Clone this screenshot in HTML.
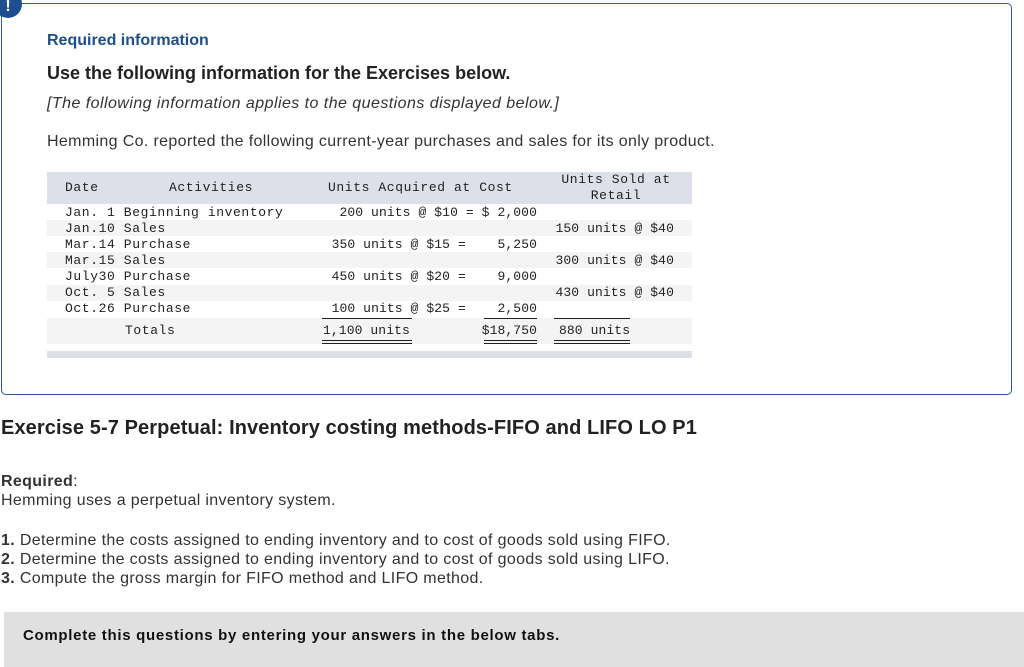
<!DOCTYPE html>
<html><head><meta charset="utf-8"><style>
*{margin:0;padding:0;box-sizing:border-box}
body{width:1024px;height:667px;background:#fff;position:relative;overflow:hidden;font-family:"Liberation Sans",sans-serif;color:#222}
.a{position:absolute;white-space:nowrap}
.m{font-family:"Liberation Mono",monospace;font-size:13px;letter-spacing:0.6px;color:#222;line-height:16px}
.n{letter-spacing:0.1px}
.r{text-align:right}
.s{font-size:16px;color:#333;letter-spacing:0.35px}
</style></head><body>
<div class="a" style="left:1px;top:3px;width:1011px;height:392px;border:1px solid #2d5a96;border-radius:5px"></div>
<div class="a" style="left:-6px;top:-10px;width:28px;height:28px;border-radius:50%;background:#1d4f8f;color:#fff;font-weight:bold;font-size:16px;text-align:center;line-height:34px">!</div>
<div class="a" style="left:47px;top:32px;font-size:16px;font-weight:bold;color:#1d4f8f">Required information</div>
<div class="a" style="left:47px;top:63px;font-size:18px;font-weight:bold;color:#222">Use the following information for the Exercises below.</div>
<div class="a s" style="left:47px;top:95px;font-style:italic;letter-spacing:0.45px">[The following information applies to the questions displayed below.]</div>
<div class="a s" style="left:47px;top:133px">Hemming Co. reported the following current-year purchases and sales for its only product.</div>

<div class="a" style="left:47px;top:172px;width:645px;height:32px;background:#dde0e8"></div>
<div class="a" style="left:47px;top:220px;width:645px;height:16px;background:#f4f4f4"></div>
<div class="a" style="left:47px;top:252px;width:645px;height:16px;background:#f4f4f4"></div>
<div class="a" style="left:47px;top:285px;width:645px;height:16px;background:#f4f4f4"></div>
<div class="a" style="left:47px;top:318px;width:645px;height:26px;background:#f4f4f4"></div>
<div class="a" style="left:47px;top:351px;width:645px;height:7px;background:#dde0e8"></div>

<div class="a m" style="left:65px;top:180px">Date</div>
<div class="a m" style="left:169px;top:180px">Activities</div>
<div class="a m" style="left:328px;top:180px">Units Acquired at Cost</div>
<div class="a m" style="left:559px;top:172px;width:114px;text-align:center">Units Sold at<br>Retail</div>

<div class="a m" style="left:65px;top:205px">Jan. 1 Beginning inventory<br>Jan.10 Sales<br>Mar.14 Purchase<br>Mar.15 Sales<br>July30 Purchase<br>Oct. 5 Sales<br>Oct.26 Purchase</div>
<div class="a m r n" style="left:300px;top:205px;width:237px">200 units @ $10 = $ 2,000<br>&nbsp;<br>350 units @ $15 =&nbsp;&nbsp;&nbsp; 5,250<br>&nbsp;<br>450 units @ $20 =&nbsp;&nbsp;&nbsp; 9,000<br>&nbsp;<br>100 units @ $25 =&nbsp;&nbsp;&nbsp; 2,500</div>
<div class="a m r n" style="left:540px;top:221px;width:134px">150 units @ $40<br>&nbsp;<br>300 units @ $40<br>&nbsp;<br>430 units @ $40</div>
<div class="a m" style="left:125px;top:323px">Totals</div>
<div class="a m n" style="left:323px;top:323px">1,100 units</div>
<div class="a m r n" style="left:470px;top:323px;width:67px">$18,750</div>
<div class="a m n" style="left:559px;top:323px">880 units</div>
<div class="a" style="left:322px;top:318px;width:90px;border-top:1px solid #222"></div>
<div class="a" style="left:484px;top:318px;width:53px;border-top:1px solid #222"></div>
<div class="a" style="left:554px;top:318px;width:76px;border-top:1px solid #222"></div>
<div class="a" style="left:322px;top:340px;width:90px;height:4px;border-top:1px solid #222;border-bottom:1px solid #222"></div>
<div class="a" style="left:484px;top:340px;width:53px;height:4px;border-top:1px solid #222;border-bottom:1px solid #222"></div>
<div class="a" style="left:554px;top:340px;width:76px;height:4px;border-top:1px solid #222;border-bottom:1px solid #222"></div>

<div class="a" style="left:1px;top:417px;font-size:20px;font-weight:bold;color:#222;letter-spacing:0.1px">Exercise 5-7 Perpetual: Inventory costing methods-FIFO and LIFO LO P1</div>
<div class="a s" style="left:1px;top:472px;line-height:19px"><b>Required</b>:<br>Hemming uses a perpetual inventory system.</div>
<div class="a s" style="left:1px;top:531px;line-height:19px"><b>1.</b> Determine the costs assigned to ending inventory and to cost of goods sold using FIFO.<br><b>2.</b> Determine the costs assigned to ending inventory and to cost of goods sold using LIFO.<br><b>3.</b> Compute the gross margin for FIFO method and LIFO method.</div>
<div class="a" style="left:4px;top:612px;width:1020px;height:55px;background:#e0e0e0"></div>
<div class="a" style="left:23px;top:627px;font-size:15px;font-weight:bold;color:#111;letter-spacing:0.7px">Complete this questions by entering your answers in the below tabs.</div>
</body></html>
